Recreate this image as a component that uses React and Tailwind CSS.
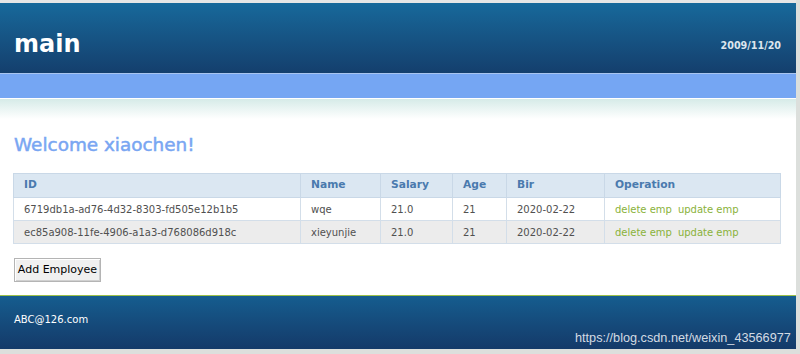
export default function App() {
  const rows = [
    { id: "6719db1a-ad76-4d32-8303-fd505e12b1b5", name: "wqe", salary: "21.0", age: "21", bir: "2020-02-22" },
    { id: "ec85a908-11fe-4906-a1a3-d768086d918c", name: "xieyunjie", salary: "21.0", age: "21", bir: "2020-02-22" },
  ];
  const th = "border border-[#c9d8e7] text-left font-bold text-[10.7px] text-[#4a7aae] pl-[10px] h-[24px] p-0";
  const td = "border border-[#d3dee9] text-[10px] text-[#505050] pl-[10px] h-[23px] p-0";
  return (
    <div className="w-[800px] h-[354px] bg-[#dcdfdc] flex overflow-hidden relative" style={{ fontFamily: '"DejaVu Sans", Verdana, sans-serif' }}>
      <div className="w-[796px] flex flex-col bg-white">
        <div className="h-[3px] bg-[#e6e6e6]" />
        <div className="h-[70px] bg-gradient-to-b from-[#17699b] to-[#143f6d] flex items-center justify-between pl-[14px] pr-[15px]">
          <div className="text-white font-bold text-[24px] leading-none mt-[12px]">main</div>
          <div className="text-[#dde6ee] font-bold text-[9.6px] mt-[16px]">2009/11/20</div>
        </div>
        <div className="h-[1px] bg-[#a9c5ef]" />
        <div className="h-[24px] bg-[#75a6f3]" />
        <div className="h-[1px] bg-white" />
        <div className="h-[20px] bg-gradient-to-b from-[#d6ebe8] to-white" />
        <div className="pl-[13px] pr-[15px]">
          <h1 className="mt-[14px] h-[24px] leading-[24px] text-[18.4px] font-normal text-[#79a6f2] pl-[1px] [-webkit-text-stroke:0.5px_#79a6f2]">Welcome xiaochen!</h1>
          <table className="mt-[16px] w-[768px] border-collapse border border-[#c9d8e7]">
            <thead>
              <tr className="bg-[#dbe7f2]">
                <th className={th + " w-[287px]"}>ID</th>
                <th className={th + " w-[80px]"}>Name</th>
                <th className={th + " w-[72px]"}>Salary</th>
                <th className={th + " w-[54px]"}>Age</th>
                <th className={th + " w-[98px]"}>Bir</th>
                <th className={th}>Operation</th>
              </tr>
            </thead>
            <tbody>
              {rows.map((r, i) => (
                <tr key={r.id} className={i % 2 === 1 ? "bg-[#ececec]" : "bg-white"}>
                  <td className={td}>{r.id}</td>
                  <td className={td}>{r.name}</td>
                  <td className={td}>{r.salary}</td>
                  <td className={td}>{r.age}</td>
                  <td className={td}>{r.bir}</td>
                  <td className={td}>
                    <span className="text-[#8ab23a]">delete emp</span>
                    <span className="text-[#8ab23a] ml-[6px]">update emp</span>
                  </td>
                </tr>
              ))}
            </tbody>
          </table>
          <button className="mt-[14px] ml-[1px] w-[87px] h-[24px] bg-[#f0f0f0] border border-[#b4b4b4] shadow-[inset_1px_1px_0_#ffffff,inset_-1px_-1px_0_#d0d0d0] text-[11px] text-black flex items-center justify-center">
            Add Employee
          </button>
        </div>
        <div className="mt-[13px] h-[1px] bg-[#9cc04a]" />
        <div className="h-[53px] bg-gradient-to-b from-[#155d8f] to-[#143a69] flex items-center pl-[14px]">
          <div className="text-white text-[10px] -mt-[6px]">ABC@126.com</div>
        </div>
        <div className="flex-1 bg-[#dcdfdc]" />
      </div>
      <div className="absolute left-[575px] top-[329px] text-[12.7px] text-[#d3dbe3] leading-[18px]" style={{ fontFamily: '"Liberation Sans", Arial, sans-serif' }}>
        https://blog.csdn.net/weixin_43566977
      </div>
    </div>
  );
}
